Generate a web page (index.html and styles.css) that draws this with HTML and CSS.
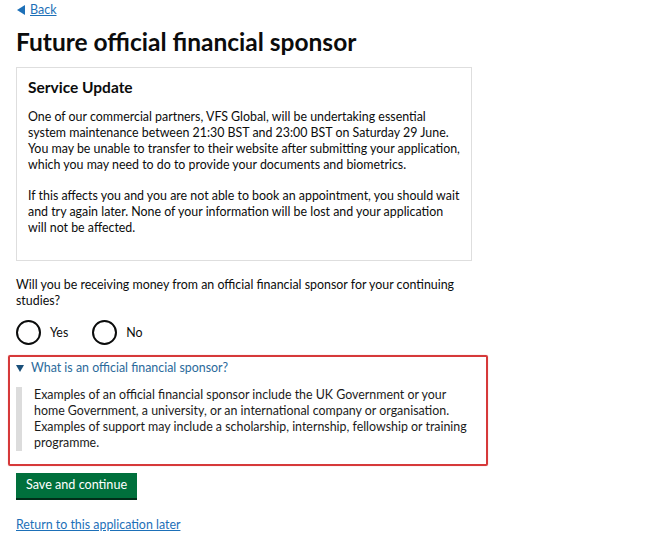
FILE: index.html
```html
<!DOCTYPE html>
<html lang="en">
<head>
<meta charset="utf-8">
<title>Future official financial sponsor</title>
<link rel="stylesheet" href="styles.css">
</head>
<body>
<div class="page">
  <a class="back" href="#"><span class="back-arrow"></span>Back</a>
  <h1 class="title">Future official financial sponsor</h1>
  <div class="notice">
    <h2 class="notice-title">Service Update</h2>
    <p class="body">One of our commercial partners, VFS Global, will be undertaking essential system maintenance between 21:30 BST and 23:00 BST on Saturday 29 June. You may be unable to transfer to their website after submitting your application, which you may need to do to provide your documents and biometrics.</p>
    <p class="body">If this affects you and you are not able to book an appointment, you should wait and try again later. None of your information will be lost and your application will not be affected.</p>
  </div>
  <p class="question">Will you be receiving money from an official financial sponsor for your continuing studies?</p>
  <div class="radios">
    <label class="radio"><span class="circle"></span>Yes</label>
    <label class="radio"><span class="circle"></span>No</label>
  </div>
  <div class="highlight">
    <div class="summary"><span class="tri"></span><span class="summary-text">What is an official financial sponsor?</span></div>
    <div class="details-text">Examples of an official financial sponsor include the UK Government or your home Government, a university, or an international company or organisation. Examples of support may include a scholarship, internship, fellowship or training programme.</div>
  </div>
  <button class="button">Save and continue</button>
  <a class="later" href="#">Return to this application later</a>
</div>
</body>
</html>
```
FILE: styles.css
```css
html, body {
  margin: 0;
  padding: 0;
  background: #ffffff;
}
body {
  font-family: Lato, "Liberation Sans", sans-serif;
  color: #0b0c0c;
}
.page {
  padding: 2px 0 0 16px;
  width: 472px;
  display: flex;
  flex-direction: column;
  align-items: flex-start;
}
.back {
  font-size: 12.5px;
  line-height: 16px;
  color: #1d70b8;
  text-decoration: underline;
  display: flex;
  align-items: center;
  gap: 5px;
  padding-left: 1px;
}
.back-arrow {
  width: 0;
  height: 0;
  border-top: 5px solid transparent;
  border-bottom: 5px solid transparent;
  border-right: 8px solid #1d70b8;
}
.title {
  font-size: 24.5px;
  line-height: 30px;
  font-weight: 700;
  margin: 9px 0 10px;
}
.notice {
  box-sizing: border-box;
  width: 456px;
  border: 1px solid #dedede;
  padding: 9px 8px 16px 11px;
}
.notice-title {
  font-size: 15.5px;
  line-height: 20px;
  font-weight: 700;
  margin: 0 0 12px;
}
.body {
  font-size: 12.4px;
  line-height: 16px;
  margin: 0 0 15px;
}
.body:last-child { margin-bottom: 8px; }
.question {
  font-size: 12.4px;
  line-height: 16px;
  margin: 16px 0 11px;
  width: 460px;
}
.radios {
  display: flex;
  gap: 24px;
}
.radio {
  display: flex;
  align-items: center;
  gap: 9px;
  font-size: 12.4px;
}
.circle {
  box-sizing: border-box;
  width: 25px;
  height: 25px;
  border: 2px solid #0b0c0c;
  border-radius: 50%;
}
.highlight {
  box-sizing: border-box;
  width: 480px;
  margin: 10px 0 0 -8px;
  border: 2px solid #d6393a;
  border-radius: 2px;
  box-shadow: 0 0 1px rgba(214, 57, 58, 0.5);
  padding: 3px 6px 13px;
}
.summary {
  display: flex;
  align-items: center;
  gap: 7px;
  font-size: 12.4px;
  line-height: 16px;
  color: #2b6a9b;
}
.tri {
  width: 0;
  height: 0;
  border-left: 4px solid transparent;
  border-right: 4px solid transparent;
  border-top: 7px solid #1a4f7a;
}
.details-text {
  margin-top: 11px;
  border-left: 6px solid #dcdcdc;
  padding: 0 10px 0 12px;
  font-size: 12.4px;
  line-height: 16px;
  color: #1b1b1b;
}
.button {
  margin-top: 7px;
  background: #00703c;
  color: #ffffff;
  border: none;
  border-bottom: 2px solid #002d18;
  font-family: inherit;
  font-size: 12.6px;
  line-height: 16px;
  padding: 4px 10px 5px;
  border-radius: 0;
}
.later {
  margin-top: 17px;
  font-size: 12.4px;
  line-height: 16px;
  color: #1d70b8;
}
```
